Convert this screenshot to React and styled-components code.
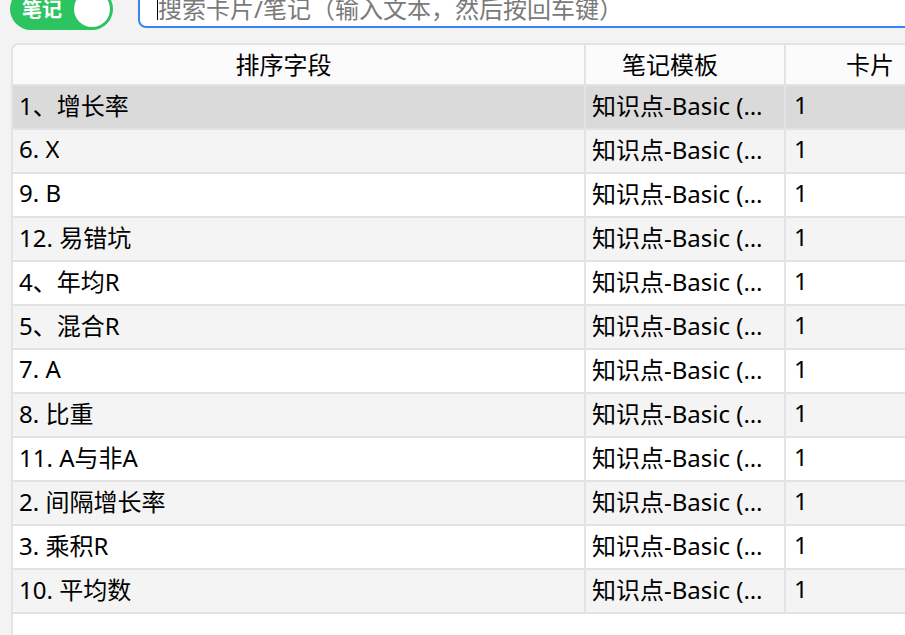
import styled, { createGlobalStyle } from "styled-components"

const GlobalStyle = createGlobalStyle`
  html, body {
    margin: 0;
    padding: 0;
    height: 100%;
    overflow: hidden;
    background-color: #F3F3F3;
    font-family: "Noto Sans", "Noto Sans CJK SC", sans-serif;
  }
  #root {
    height: 100%;
  }
`

const Page = styled.div`
  display: flex;
  flex-direction: column;
  height: 100%;
`

const TopBar = styled.div`
  display: flex;
  flex-direction: row;
  align-items: flex-start;
  margin-top: -12px;
  padding-left: 10px;
  height: 42px;
  flex-shrink: 0;
`

const Toggle = styled.div`
  display: flex;
  flex-direction: row;
  align-items: center;
  justify-content: space-between;
  flex-shrink: 0;
  width: 103px;
  height: 42px;
  border-radius: 21px;
  background-color: #2CC45E;
  padding: 0 3px 0 12px;
  box-sizing: border-box;
`

const ToggleLabel = styled.span`
  color: #FFFFFF;
  font-weight: 700;
  font-size: 20px;
  line-height: 1;
  white-space: nowrap;
  margin-top: 1px;
`

const ToggleKnob = styled.div`
  flex-shrink: 0;
  width: 36px;
  height: 36px;
  border-radius: 50%;
  background-color: #FFFFFF;
`

const SearchBox = styled.div`
  position: relative;
  margin-left: 25px;
  width: 800px;
  height: 40px;
  box-sizing: border-box;
  border: 2px solid #3B82F6;
  border-radius: 8px;
  background-color: #FFFFFF;
  flex-shrink: 0;
`

const SearchInput = styled.input`
  width: 100%;
  height: 100%;
  box-sizing: border-box;
  border: none;
  outline: none;
  background: transparent;
  padding: 0 0 0 18px;
  font-family: "Noto Sans", "Noto Sans CJK SC", sans-serif;
  font-size: 24px;

  &::placeholder {
    color: #7A7A7A;
  }
`

const Caret = styled.span`
  position: absolute;
  left: 17px;
  top: 9px;
  width: 1px;
  height: 21px;
  background-color: #000000;
`

const Table = styled.div`
  display: flex;
  flex-direction: column;
  flex: 1;
  margin: 13px 0 0 11px;
  width: 975px;
  background-color: #FFFFFF;
  border-left: 2px solid #E3E3E3;
  border-top: 2px solid #E3E3E3;
  border-top-left-radius: 8px;
  overflow: hidden;
`

const Row = styled.div`
  display: grid;
  grid-template-columns: 573px 200px 200px;
  height: ${props => props.header ? "41px" : "44px"};
  box-sizing: border-box;
  border-bottom: 2px solid #E3E3E3;
  background-color: ${props =>
    props.header ? "#FBFBFB" : props.selected ? "#DADADA" : props.striped ? "#F4F4F4" : "#FFFFFF"};
`

const Cell = styled.div`
  display: flex;
  align-items: center;
  justify-content: ${props => props.header ? "center" : "flex-start"};
  padding: ${props => props.header ? "0 30px 2px 0" : `0 6px 6px ${props.pad || 6}px`};
  box-sizing: border-box;
  border-right: 2px solid #E3E3E3;
  font-size: 24px;
  color: #000000;
  overflow: hidden;
  min-width: 0;
`

const CellText = styled.span`
  white-space: nowrap;
  overflow: hidden;
  text-overflow: ellipsis;
`

const notes = [
  "1、增长率",
  "6. X",
  "9. B",
  "12. 易错坑",
  "4、年均R",
  "5、混合R",
  "7. A",
  "8. 比重",
  "11. A与非A",
  "2. 间隔增长率",
  "3. 乘积R",
  "10. 平均数",
]

export default function App() {
  return (
    <Page>
      <GlobalStyle />
      <TopBar>
        <Toggle>
          <ToggleLabel>笔记</ToggleLabel>
          <ToggleKnob />
        </Toggle>
        <SearchBox>
          <SearchInput placeholder="搜索卡片/笔记（输入文本，然后按回车键）" />
          <Caret />
        </SearchBox>
      </TopBar>
      <Table>
        <Row header>
          <Cell header>排序字段</Cell>
          <Cell header>笔记模板</Cell>
          <Cell header>卡片</Cell>
        </Row>
        {notes.map((name, i) => (
          <Row key={name} selected={i === 0} striped={i % 2 === 1}>
            <Cell><CellText>{name}</CellText></Cell>
            <Cell><CellText>知识点-Basic (输入答案)</CellText></Cell>
            <Cell pad={8}><CellText>1</CellText></Cell>
          </Row>
        ))}
      </Table>
    </Page>
  )
}
